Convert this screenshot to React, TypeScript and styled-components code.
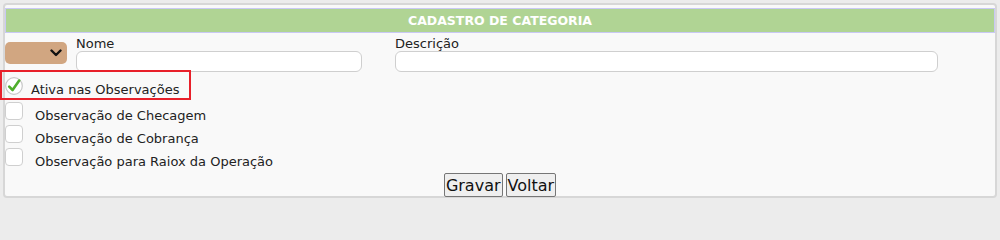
import React from 'react';
import styled, { createGlobalStyle } from 'styled-components';

const GlobalStyle = createGlobalStyle`
  html, body {
    margin: 0;
    padding: 0;
    background: #ececec;
  }
  body {
    font-family: 'DejaVu Sans', 'Noto Sans', sans-serif;
    font-size: 13px;
    color: #222;
  }
`;

const App: React.FC = () => {
  const options = [
    'Observação de Checagem',
    'Observação de Cobrança',
    'Observação para Raiox da Operação',
  ];

  return (
    <>
      <GlobalStyle />
      <Panel>
        <Header>CADASTRO DE CATEGORIA</Header>
        <FieldsRow>
          <ColorSelect>
            <svg width="12" height="8" viewBox="0 0 12 8">
              <path
                d="M1.5 1.5 L6 6 L10.5 1.5"
                fill="none"
                stroke="#111"
                strokeWidth="2.4"
                strokeLinecap="round"
                strokeLinejoin="round"
              />
            </svg>
          </ColorSelect>
          <Field width={286}>
            <Label>Nome</Label>
            <TextInput />
          </Field>
          <Field width={543} offset={33}>
            <Label>Descrição</Label>
            <TextInput />
          </Field>
        </FieldsRow>
        <Highlight>
          <CheckCircle>
            <svg width="18" height="18" viewBox="0 0 18 18">
              <circle cx="9" cy="9" r="8.3" fill="#fff" stroke="#c8c8c8" strokeWidth="1.2" />
              <path
                d="M4.2 9.6 L7.6 13 L14.2 3.6"
                fill="none"
                stroke="#4fae2c"
                strokeWidth="2.6"
                strokeLinecap="round"
                strokeLinejoin="round"
              />
            </svg>
          </CheckCircle>
          <ActiveText>Ativa nas Observações</ActiveText>
        </Highlight>
        {options.map(o => (
          <OptionRow key={o}>
            <Box />
            <OptionText>{o}</OptionText>
          </OptionRow>
        ))}
        <Actions>
          <Button>Gravar</Button>
          <Button>Voltar</Button>
        </Actions>
      </Panel>
    </>
  );
};

const Panel = styled.div`
  margin: 3px 3px 0 3px;
  height: 195px;
  box-sizing: border-box;
  border: 2px solid #d7d7d7;
  border-radius: 4px;
  background: #f9f9f9;
  padding: 3px 0 0 0;
  display: flex;
  flex-flow: column;
`;

const Header = styled.div`
  height: 25px;
  flex-shrink: 0;
  box-sizing: border-box;
  background: #b0d494;
  border: 1px solid #c9c9f4;
  color: #fff;
  font-weight: bold;
  font-size: 12.5px;
  display: flex;
  align-items: center;
  justify-content: center;
`;

const FieldsRow = styled.div`
  display: flex;
  flex-flow: row;
  align-items: flex-start;
  padding-top: 4px;
  height: 33px;
  flex-shrink: 0;
`;

const ColorSelect = styled.div`
  width: 62px;
  height: 22px;
  margin-top: 5px;
  box-sizing: border-box;
  background: #d1a681;
  border-radius: 5px;
  display: flex;
  align-items: center;
  justify-content: flex-end;
  padding-right: 5px;
`;

const Field = styled.div<{ width: number; offset?: number }>`
  width: ${p => p.width}px;
  margin-left: ${p => p.offset ?? 9}px;
  display: flex;
  flex-flow: column;
`;

const Label = styled.div`
  height: 14px;
  line-height: 14px;
  font-size: 13px;
`;

const TextInput = styled.input`
  height: 21px;
  box-sizing: border-box;
  border: 1px solid #cfcfcf;
  border-radius: 6px;
  background: #fff;
  outline: none;
`;

const Highlight = styled.div`
  margin: 0 0 0 -5px;
  width: 191px;
  height: 30px;
  flex-shrink: 0;
  box-sizing: border-box;
  border: 2px solid #e8202a;
  display: flex;
  align-items: flex-start;
  padding: 5px 0 0 3px;
`;

const CheckCircle = styled.div`
  width: 18px;
  height: 18px;
  display: flex;
`;

const ActiveText = styled.span`
  margin: 6px 0 0 8px;
  line-height: 14px;
`;

const OptionRow = styled.div`
  display: flex;
  align-items: flex-start;
  height: 23px;
  flex-shrink: 0;
`;

const Box = styled.div`
  width: 18px;
  height: 18px;
  box-sizing: border-box;
  border: 1px solid #cfcfcf;
  border-radius: 4px;
  background: #fff;
  margin-top: 2px;
`;

const OptionText = styled.span`
  margin: 9px 0 0 12px;
  line-height: 14px;
`;

const Actions = styled.div`
  display: flex;
  justify-content: center;
  gap: 3px;
  margin-top: 4px;
`;

const Button = styled.button`
  font-family: 'DejaVu Sans', sans-serif;
  font-size: 16px;
  padding: 0 1px;
  height: 24px;
  border: 1px solid #767676;
  border-radius: 2px;
  background: #efefef;
  color: #111;
`;

export default App;
